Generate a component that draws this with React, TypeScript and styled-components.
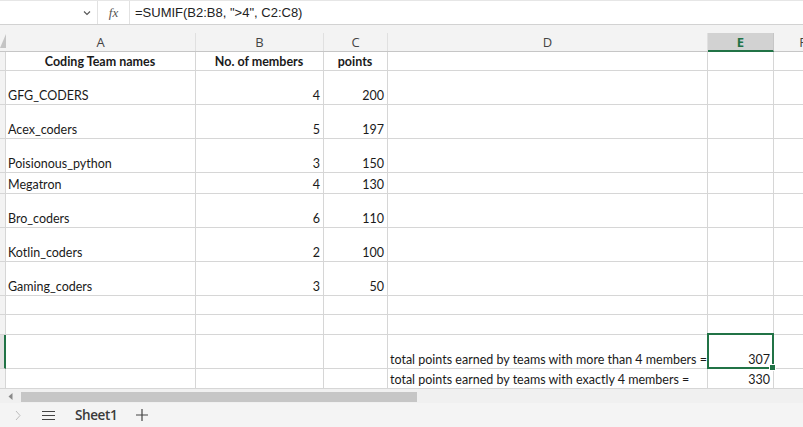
import React from "react";
import styled, { createGlobalStyle, css } from "styled-components";

const Global = createGlobalStyle`
  html, body { margin: 0; padding: 0; background: #ffffff; overflow: hidden; }
  body { width: 803px; height: 427px; font-family: "Liberation Sans", Arial, sans-serif; }
`;

const COLS = "6px 190px 128px 64px 320px 66px 58px";
const GREEN = "#217346";
const GRID = "#d6d6d6";
const CELL_FONT = `"Lato", "Liberation Sans", Arial, sans-serif`;

const Page = styled.div`
  width: 803px;
  height: 427px;
  display: flex;
  flex-direction: column;
  overflow: hidden;
  background: #fff;
`;

const FormulaBar = styled.div`
  height: 25px;
  box-sizing: border-box;
  border-top: 1px solid #e6e6e6;
  border-bottom: 1px solid #d2d2d2;
  display: flex;
  align-items: stretch;
  background: #fff;
`;

const NameBox = styled.div`
  width: 98px;
  display: flex;
  align-items: center;
  justify-content: flex-end;
  padding-right: 6px;
  box-sizing: border-box;
  border-right: 1px solid #e2e2e2;
`;

const FxBox = styled.div`
  width: 31px;
  display: flex;
  align-items: center;
  justify-content: center;
  border-right: 1px solid #e2e2e2;
  font-family: "Liberation Serif", "Times New Roman", serif;
  font-style: italic;
  font-size: 13px;
  color: #555;
`;

const FormulaText = styled.div`
  flex: 1;
  display: flex;
  align-items: center;
  padding-left: 5px;
  font-family: "Liberation Sans", Arial, sans-serif;
  font-size: 13px;
  color: #222;
`;

const HeaderArea = styled.div`
  width: 860px;
  height: 27px;
  box-sizing: border-box;
  background: #f3f3f3;
  border-bottom: 1px solid #c6c6c6;
  display: grid;
  grid-template-columns: ${COLS};
  align-items: end;
`;

const Corner = styled.div`
  height: 18px;
  overflow: hidden;
`;

const CornerTri = styled.svg`
  display: block;
`;

const ColHead = styled.div<{ $active?: boolean }>`
  height: 18px;
  display: flex;
  align-items: center;
  justify-content: center;
  box-sizing: border-box;
  font-family: "Open Sans", "Liberation Sans", sans-serif;
  font-size: 13px;
  color: #444;
  border-right: 1px solid #e0e0e0;
  ${(p) =>
    p.$active &&
    css`
      background: #d2d2d2;
      color: ${GREEN};
      font-weight: 700;
      border-bottom: 2px solid ${GREEN};
      margin-bottom: -1px;
      height: 19px;
      border-right: 1px solid #c6c6c6;
    `}
`;

const Sheet = styled.div`
  width: 860px;
  display: flex;
  flex-direction: column;
`;

const Row = styled.div<{ $h: number }>`
  display: grid;
  grid-template-columns: ${COLS};
  height: ${(p) => p.$h}px;
`;

const RowHead = styled.div<{ $active?: boolean }>`
  background: #f3f3f3;
  box-sizing: border-box;
  border-right: 1px solid ${GRID};
  border-bottom: 1px solid ${GRID};
  ${(p) =>
    p.$active &&
    css`
      border-right: 2px solid ${GREEN};
      background: #e1e1e1;
    `}
`;

const Cell = styled.div<{ $align?: "left" | "right" | "center"; $bold?: boolean; $selected?: boolean }>`
  position: relative;
  box-sizing: border-box;
  border-right: 1px solid ${GRID};
  border-bottom: 1px solid ${GRID};
  display: flex;
  align-items: flex-end;
  justify-content: ${(p) =>
    p.$align === "right" ? "flex-end" : p.$align === "center" ? "center" : "flex-start"};
  padding: 0 3px 1px 2px;
  font-family: ${CELL_FONT};
  font-size: 12.5px;
  line-height: 15px;
  color: #1a1a1a;
  font-weight: ${(p) => (p.$bold ? 700 : 400)};
  white-space: nowrap;
  ${(p) =>
    p.$selected &&
    css`
      &::after {
        content: "";
        position: absolute;
        top: -2px;
        left: -1px;
        right: -1px;
        bottom: -1px;
        border: 2px solid ${GREEN};
        pointer-events: none;
      }
      &::before {
        content: "";
        position: absolute;
        right: -3px;
        bottom: -3px;
        width: 5px;
        height: 5px;
        background: ${GREEN};
        border: 1px solid #fff;
        z-index: 2;
      }
    `}
`;

const ScrollBar = styled.div`
  height: 14px;
  background: #f0f0f0;
  display: flex;
  align-items: flex-end;
  padding-bottom: 1px;
  box-sizing: border-box;
`;

const ScrollArrow = styled.div`
  width: 21px;
  height: 11px;
  display: flex;
  align-items: center;
  justify-content: center;
`;

const ScrollThumb = styled.div`
  width: 396px;
  height: 10px;
  background: #c6c6c6;
`;

const TabBar = styled.div`
  flex: 1;
  background: #f4f4f4;
  display: flex;
  align-items: center;
  padding-left: 12px;
  color: #444;
`;

const TabIcon = styled.div<{ $w: number }>`
  width: ${(p) => p.$w}px;
  display: flex;
  align-items: center;
  justify-content: center;
`;

const SheetTab = styled.div`
  font-family: "Open Sans", "Liberation Sans", sans-serif;
  font-size: 13.5px;
  font-weight: 600;
  color: #3a3a3a;
  letter-spacing: -0.4px;
  padding: 0 19px 0 2px;
`;

type Data = { h: number; a?: string; b?: string; c?: string; d?: string; e?: string; head?: boolean; sel?: boolean };

const rows: Data[] = [
  { h: 19, a: "Coding Team names", b: "No. of members", c: "points", head: true },
  { h: 34, a: "GFG_CODERS", b: "4", c: "200" },
  { h: 34, a: "Acex_coders", b: "5", c: "197" },
  { h: 34, a: "Poisionous_python", b: "3", c: "150" },
  { h: 21, a: "Megatron", b: "4", c: "130" },
  { h: 34, a: "Bro_coders", b: "6", c: "110" },
  { h: 34, a: "Kotlin_coders", b: "2", c: "100" },
  { h: 34, a: "Gaming_coders", b: "3", c: "50" },
  { h: 19 },
  { h: 20 },
  { h: 34, d: "total points earned by teams with more than 4 members =", e: "307", sel: true },
  { h: 20, d: "total points earned by teams with exactly 4 members =", e: "330" },
];

export default function App() {
  return (
    <Page>
      <Global />
      <FormulaBar>
        <NameBox>
          <svg width="8" height="6" viewBox="0 0 8 6">
            <path d="M1 1.5 L4 4.5 L7 1.5" fill="none" stroke="#555" strokeWidth="1.1" />
          </svg>
        </NameBox>
        <FxBox>fx</FxBox>
        <FormulaText>=SUMIF(B2:B8, "&gt;4", C2:C8)</FormulaText>
      </FormulaBar>
      <HeaderArea>
        <Corner>
          <CornerTri width="6" height="16" viewBox="0 0 6 16">
            <path d="M6 1 L6 15 L0 15 Z" fill="#c4c4c4" />
          </CornerTri>
        </Corner>
        <ColHead>A</ColHead>
        <ColHead>B</ColHead>
        <ColHead>C</ColHead>
        <ColHead>D</ColHead>
        <ColHead $active>E</ColHead>
        <ColHead>F</ColHead>
      </HeaderArea>
      <Sheet>
        {rows.map((r, i) => (
          <Row key={i} $h={r.h}>
            <RowHead $active={r.sel} />
            <Cell $align={r.head ? "center" : "left"} $bold={r.head}>{r.a}</Cell>
            <Cell $align={r.head ? "center" : "right"} $bold={r.head}>{r.b}</Cell>
            <Cell $align={r.head ? "center" : "right"} $bold={r.head}>{r.c}</Cell>
            <Cell $align="left">{r.d}</Cell>
            <Cell $align="right" $selected={r.sel}>{r.e}</Cell>
            <Cell />
          </Row>
        ))}
      </Sheet>
      <ScrollBar>
        <ScrollArrow>
          <svg width="5" height="7" viewBox="0 0 5 7">
            <path d="M4.5 0 L0.5 3.5 L4.5 7 Z" fill="#8a8a8a" />
          </svg>
        </ScrollArrow>
        <ScrollThumb />
      </ScrollBar>
      <TabBar>
        <TabIcon $w={12}>
          <svg width="6" height="11" viewBox="0 0 6 11">
            <path d="M1 1 L5 5.5 L1 10" fill="none" stroke="#bdbdbd" strokeWidth="1" />
          </svg>
        </TabIcon>
        <TabIcon $w={49}>
          <svg width="13" height="11" viewBox="0 0 13 11">
            <path d="M0 1.5 H13 M0 5.5 H13 M0 9.5 H13" stroke="#444" strokeWidth="1.2" />
          </svg>
        </TabIcon>
        <SheetTab>Sheet1</SheetTab>
        <TabIcon $w={12}>
          <svg width="12" height="12" viewBox="0 0 12 12">
            <path d="M6 0 V12 M0 6 H12" stroke="#444" strokeWidth="1.2" />
          </svg>
        </TabIcon>
      </TabBar>
    </Page>
  );
}
